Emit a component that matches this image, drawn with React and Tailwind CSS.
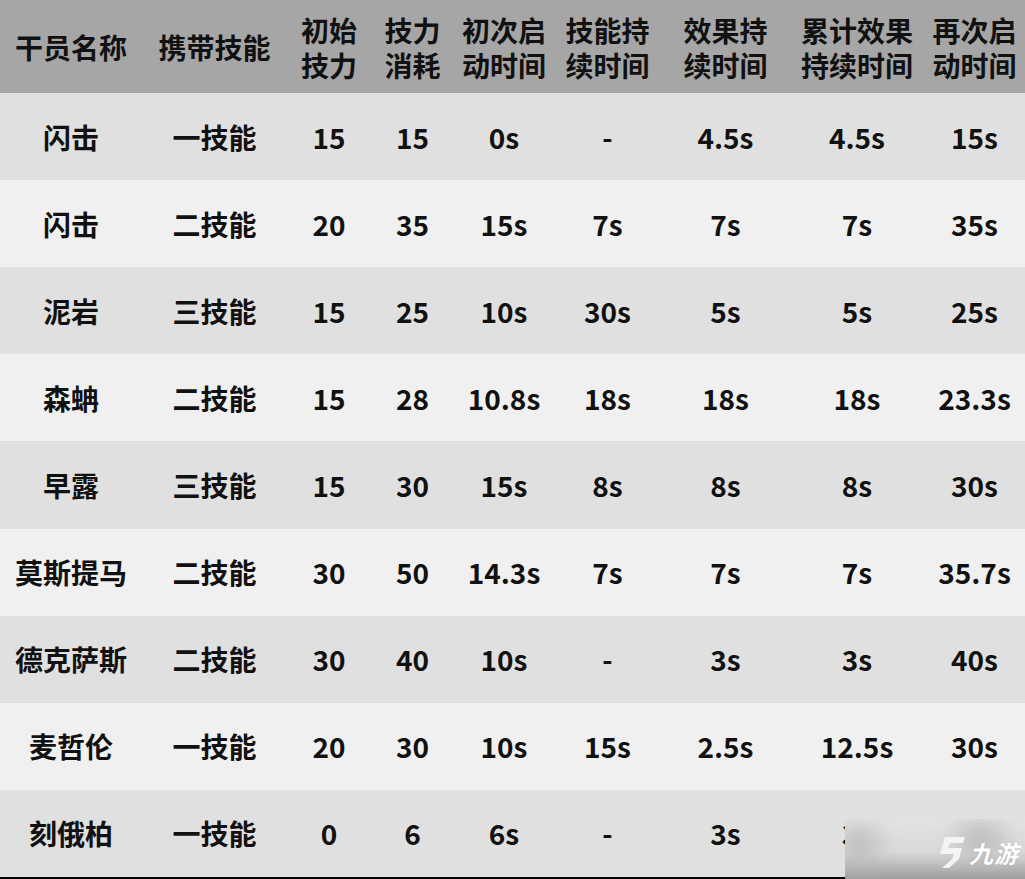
import React from "react";

const cols = "grid grid-cols-[142px_145px_84px_83px_100px_107px_129px_134px_101px]";

const header = [
  ["干员名称"],
  ["携带技能"],
  ["初始", "技力"],
  ["技力", "消耗"],
  ["初次启", "动时间"],
  ["技能持", "续时间"],
  ["效果持", "续时间"],
  ["累计效果", "持续时间"],
  ["再次启", "动时间"],
];

const rows = [
  ["闪击", "一技能", "15", "15", "0s", "-", "4.5s", "4.5s", "15s"],
  ["闪击", "二技能", "20", "35", "15s", "7s", "7s", "7s", "35s"],
  ["泥岩", "三技能", "15", "25", "10s", "30s", "5s", "5s", "25s"],
  ["森蚺", "二技能", "15", "28", "10.8s", "18s", "18s", "18s", "23.3s"],
  ["早露", "三技能", "15", "30", "15s", "8s", "8s", "8s", "30s"],
  ["莫斯提马", "二技能", "30", "50", "14.3s", "7s", "7s", "7s", "35.7s"],
  ["德克萨斯", "二技能", "30", "40", "10s", "-", "3s", "3s", "40s"],
  ["麦哲伦", "一技能", "20", "30", "10s", "15s", "2.5s", "12.5s", "30s"],
  ["刻俄柏", "一技能", "0", "6", "6s", "-", "3s", "3s", ""],
];

export default function App() {
  return (
    <div className="relative w-[1025px] h-[879px] overflow-hidden bg-[#e0e0e0] text-[#111] font-bold text-[28px] [font-family:'Noto_Sans_CJK_SC','Noto_Sans',sans-serif]">
      <div className="flex flex-col h-full">
        <div className={`${cols} h-[93px] shrink-0 bg-[#a6a6a6]`}>
          {header.map((lines, i) => (
            <div key={i} className="flex flex-col items-center justify-center pt-[2px] leading-[35px] whitespace-nowrap">
              {lines.map((l, j) => (
                <span key={j}>{l}</span>
              ))}
            </div>
          ))}
        </div>
        {rows.map((r, i) => (
          <div
            key={i}
            className={`${cols} flex-1 ${i % 2 === 0 ? "bg-[#e0e0e0]" : "bg-[#f0f0f0]"} ${i === rows.length - 1 ? "border-b-2 border-black" : ""}`}
          >
            {r.map((c, j) => (
              <div key={j} className="flex items-center justify-center whitespace-nowrap leading-none">
                {c}
              </div>
            ))}
          </div>
        ))}
      </div>

      <div className="absolute left-[845px] top-[819px] w-[180px] h-[60px] overflow-hidden bg-[linear-gradient(180deg,#e3e3e3_0%,#d9d9d9_55%,#9e9e9e_100%)]">
        <div className="absolute left-[-6px] top-[8px] w-[40px] h-[36px] rounded-full bg-[#b4b4b4] blur-md opacity-80" />
        <div className="absolute left-[110px] top-[4px] w-[50px] h-[34px] rounded-full bg-[#b4b4b4] blur-md opacity-80" />
        <div className="absolute left-[92px] top-[18px] flex items-center gap-[4px]">
          <svg width="28" height="31" viewBox="0 0 28 31">
            <path
              d="M8 0 H28 L26 6 H13 L11 11 H25 L22 22 L12 31 H5 L15 22 L17 17 H3 Z"
              fill="#f4f4f4"
            />
          </svg>
          <span className="italic text-white text-[24px] font-bold leading-none tracking-[1px] [text-shadow:0_0_2px_rgba(0,0,0,0.15)]">九游</span>
        </div>
      </div>
    </div>
  );
}
